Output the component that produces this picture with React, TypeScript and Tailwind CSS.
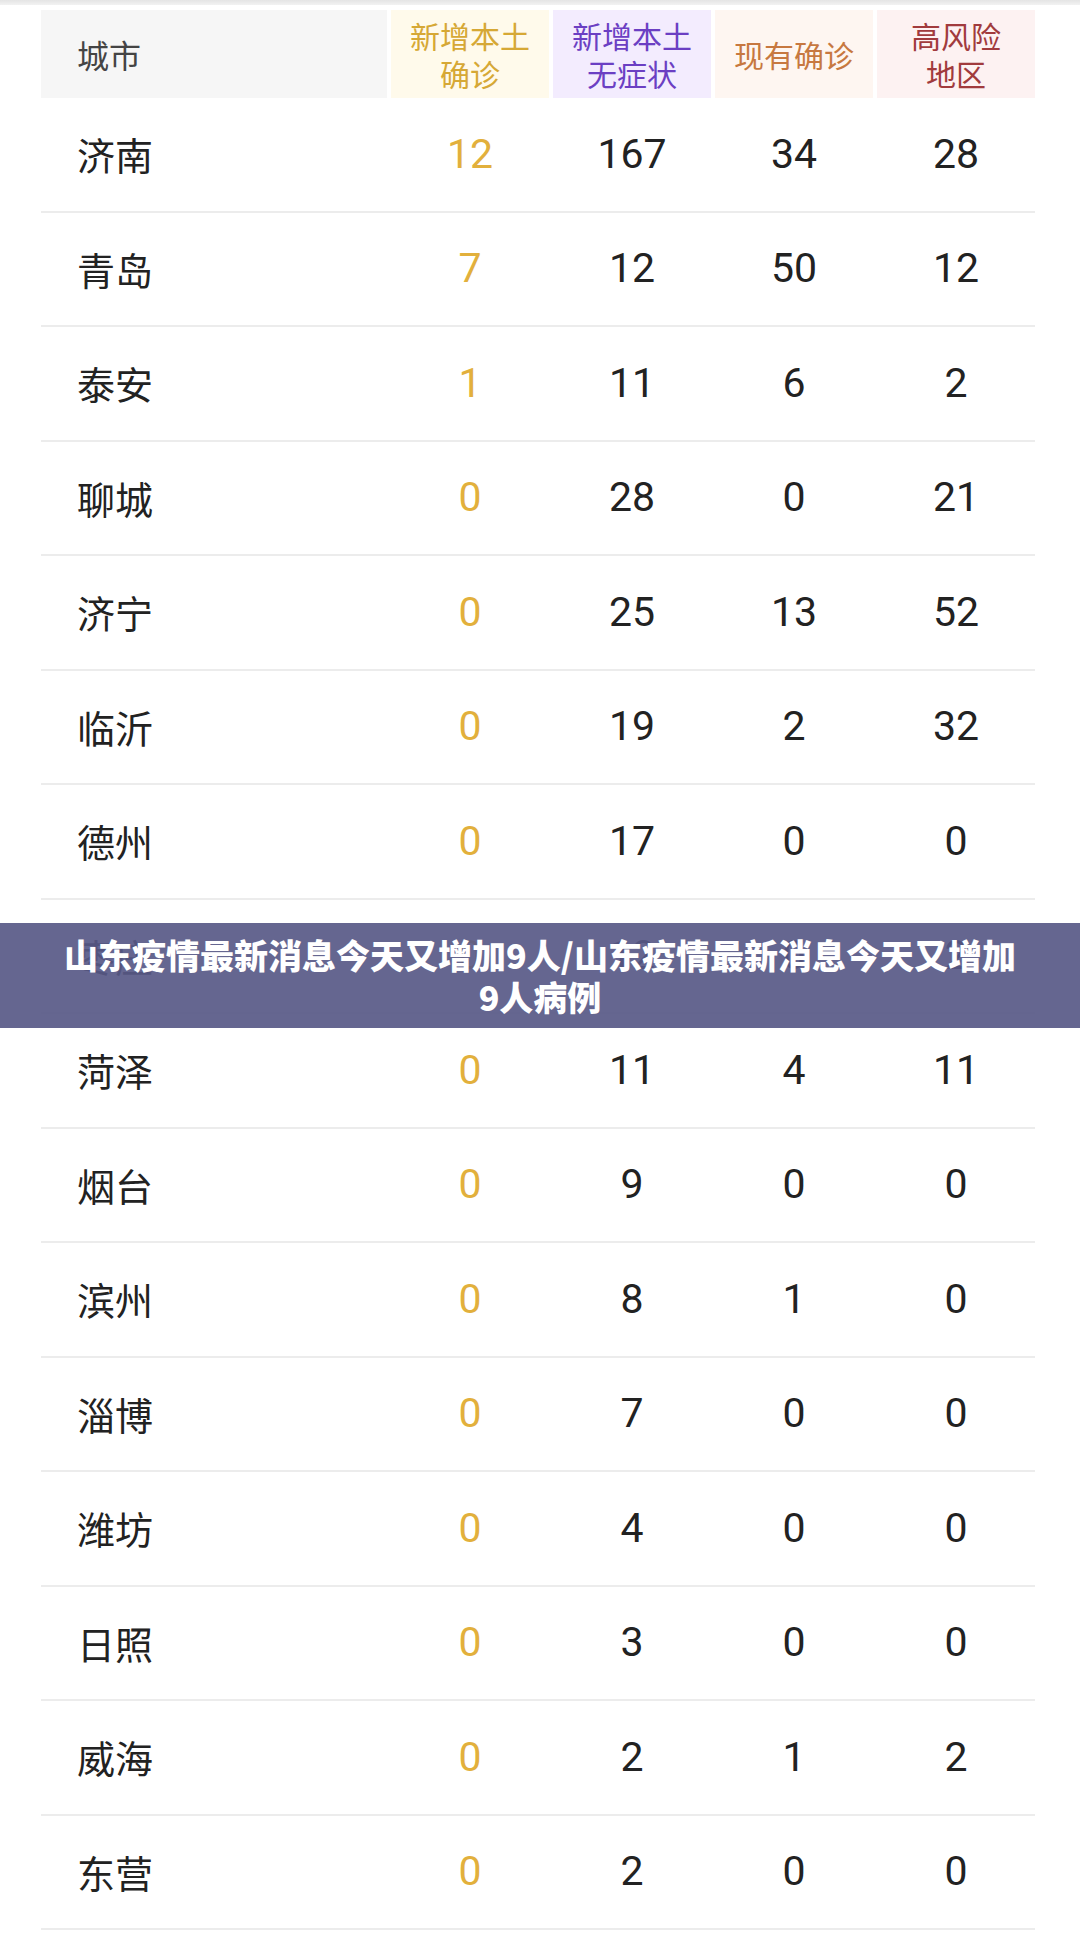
import React from 'react';

const rows: [string, string, string, string, string][] = [
  ['济南', '12', '167', '34', '28'],
  ['青岛', '7', '12', '50', '12'],
  ['泰安', '1', '11', '6', '2'],
  ['聊城', '0', '28', '0', '21'],
  ['济宁', '0', '25', '13', '52'],
  ['临沂', '0', '19', '2', '32'],
  ['德州', '0', '17', '0', '0'],
  ['枣庄', '0', '12', '0', '2'],
  ['菏泽', '0', '11', '4', '11'],
  ['烟台', '0', '9', '0', '0'],
  ['滨州', '0', '8', '1', '0'],
  ['淄博', '0', '7', '0', '0'],
  ['潍坊', '0', '4', '0', '0'],
  ['日照', '0', '3', '0', '0'],
  ['威海', '0', '2', '1', '2'],
  ['东营', '0', '2', '0', '0'],
];

function Num({ value, gold }: { value: string; gold?: boolean }) {
  return (
    <div className="flex justify-center">
      <span
        className={
          "inline-block text-[41px] leading-none font-['Roboto','Noto_Sans_CJK_SC',sans-serif] " +
          (gold ? 'text-[#e2b03c]' : 'text-[#222222]')
        }
      >
        {value}
      </span>
    </div>
  );
}

export default function App() {
  return (
    <div className="relative w-[1080px] h-[1952px] overflow-hidden bg-white font-['Noto_Sans_CJK_SC',sans-serif]">
      {/* top edge */}
      <div className="h-[5px] bg-gradient-to-b from-[#e4e4e4] to-[#f2f2f2]" />

      <div className="ml-[41px] w-[994px] mt-[5px]">
        {/* header */}
        <div className="grid grid-cols-[346px_158px_158px_158px_158px] gap-x-[4px] h-[88px] text-[30px] leading-[38px]">
          <div className="flex items-center bg-[#f6f6f6] pl-[36px] text-[32px] text-[#444444]">城市</div>
          <div className="flex items-center justify-center text-center bg-[#fffaeb] text-[#d6a835]">
            新增本土
            <br />
            确诊
          </div>
          <div className="flex items-center justify-center text-center bg-[#f3ecfe] text-[#6b3fc3]">
            新增本土
            <br />
            无症状
          </div>
          <div className="flex items-center justify-center text-center bg-[#fef6f1] text-[#c77840]">现有确诊</div>
          <div className="flex items-center justify-center text-center bg-[#fdf2f2] text-[#a13b3d]">
            高风险
            <br />
            地区
          </div>
        </div>

        {/* body */}
        {rows.map(([city, a, b, c, d]) => (
          <div
            key={city}
            className="grid grid-cols-[346px_158px_158px_158px_158px] gap-x-[4px] h-[114.5px] items-center border-b-2 border-[#ececec]"
          >
            <div className="pl-[36px] text-[38px] leading-none text-[#222222]">{city}</div>
            <Num value={a} gold />
            <Num value={b} />
            <Num value={c} />
            <Num value={d} />
          </div>
        ))}
      </div>

      {/* title overlay */}
      <div className="absolute left-0 right-0 top-[923px] h-[105px] flex items-center justify-center bg-[rgba(88,89,135,0.92)]">
        <p className="text-center text-white font-black text-[34px] leading-[42px]">
          山东疫情最新消息今天又增加9人/山东疫情最新消息今天又增加
          <br />
          9人病例
        </p>
      </div>
    </div>
  );
}
